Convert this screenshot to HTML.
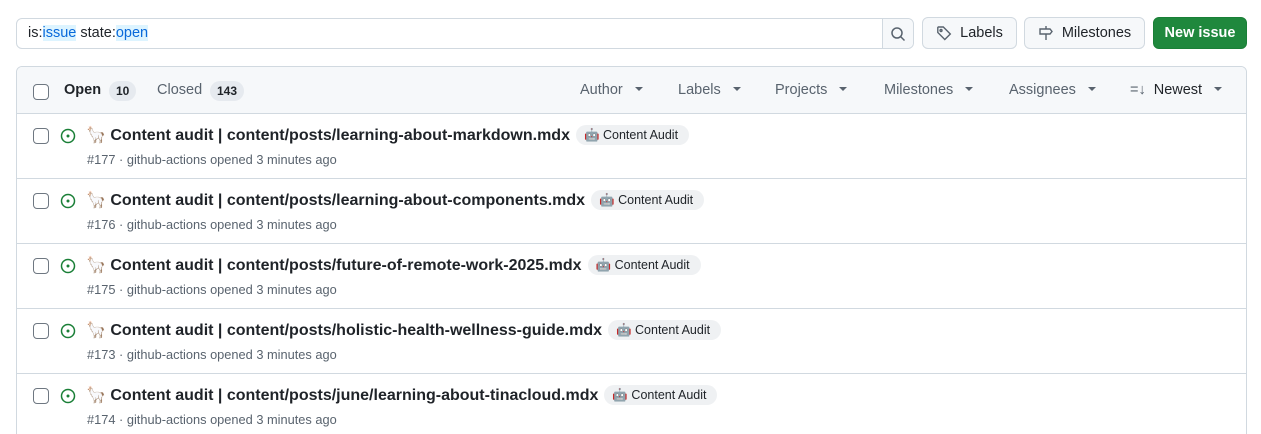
<!DOCTYPE html>
<html><head><style>
*{box-sizing:border-box;margin:0;padding:0}
html,body{width:1261px;height:434px;overflow:hidden}
body{background:#fff;font-family:"Liberation Sans",Arial,sans-serif;color:#1f2328;position:relative}
.abs{position:absolute}
.search{left:16px;top:18px;width:898px;height:31px;border:1px solid #d1d9e0;border-radius:6px;font-size:14.5px;line-height:29px;padding-left:11px}
.search .h{color:#0969da;background:#ddf4ff}
.sbtn{position:absolute;right:0;top:0;width:31px;height:29px;border-left:1px solid #d1d9e0;background:#f6f8fa;border-radius:0 6px 6px 0;display:flex;align-items:center;justify-content:center}
.btn{top:17px;height:32px;border:1px solid #d1d9e0;border-radius:6px;background:#f6f8fa;font-size:14.5px;font-weight:bold;display:flex;align-items:center;justify-content:center;gap:8px}
.box{left:16px;top:66px;width:1231px;height:380px;border:1px solid #d1d9e0;border-radius:6px;overflow:hidden}
.hdr{height:47px;background:#f6f8fa;border-bottom:1px solid #d1d9e0;position:relative;font-size:14.5px}
.cb{position:absolute;width:16px;height:16px;border:1px solid #6e7781;border-radius:4px;background:#fff}
.cnt{display:inline-block;background:#e6eaef;border-radius:10px;padding:0 7px;font-size:12px;font-weight:bold;line-height:20px}
.f{position:absolute;top:15px;color:#59636e}
.f:after{content:"";display:inline-block;margin-left:12px;border:4px solid transparent;border-top-color:#59636e;border-bottom:0;vertical-align:3px}
.row{height:65px;border-bottom:1px solid #d1d9e0;position:relative}
.t{position:absolute;left:69px;top:11px;font-size:16px;font-weight:bold;white-space:nowrap;display:flex;align-items:center}
.lab{display:inline-block;margin-left:6px;background:#eff1f3;border-radius:12px;font-size:12.5px;padding:0 11px 0 8px;line-height:20px;font-weight:normal}
.m{position:absolute;left:70px;top:38px;font-size:12.8px;color:#59636e}
.oi{position:absolute;left:43px;top:14px}
</style></head><body>
<div class="abs search">is:<span class="h">issue</span> state:<span class="h">open</span>
<div class="sbtn"><svg width="16" height="16" viewBox="0 0 16 16" fill="none" stroke="#59636e" stroke-width="1.5"><circle cx="7" cy="7" r="5"/><path d="M10.5 10.5l4 4"/></svg></div></div>
<div class="abs btn" style="left:922px;width:95px"><svg width="16" height="16" viewBox="0 0 16 16" fill="none" stroke="#59636e" stroke-width="1.4"><path d="M1.8 2.5v5l7 7 5.5-5.5-7-7h-5z"/><circle cx="5" cy="5.5" r="1"/></svg><span style="font-weight:normal">Labels</span></div>
<div class="abs btn" style="left:1024px;width:121px"><svg width="16" height="16" viewBox="0 0 16 16" fill="none" stroke="#59636e" stroke-width="1.4"><path d="M8 1v3M8 9v6M2 4h10l2 2.5-2 2.5H2z"/></svg><span style="font-weight:normal">Milestones</span></div>
<div class="abs btn" style="left:1153px;width:94px;background:#1f883d;border-color:#1a7f37;color:#fff">New issue</div>
<div class="abs box">
<div class="hdr">
<div class="cb" style="left:16px;top:17px"></div>
<span class="abs" style="left:47px;top:15px;font-weight:bold">Open</span><span class="abs cnt" style="left:92px;top:14px">10</span>
<span class="abs" style="left:140px;top:15px;color:#59636e">Closed</span><span class="abs cnt" style="left:193px;top:14px">143</span>
<span class="f" style="left:563px">Author</span>
<span class="f" style="left:661px">Labels</span>
<span class="f" style="left:758px">Projects</span>
<span class="f" style="left:867px">Milestones</span>
<span class="f" style="left:992px">Assignees</span>
<span class="f" style="left:1113px;color:#1f2328;font-weight:bold"><span style="font-weight:normal;color:#59636e;margin-right:8px">=↓</span><span style="font-weight:normal">Newest</span></span>
</div>
<div class="row"><div class="cb" style="left:16px;top:14px"></div><svg class="oi" width="16" height="16" viewBox="0 0 16 16"><circle cx="8" cy="8" r="6.5" fill="none" stroke="#1a7f37" stroke-width="1.5"/><circle cx="8" cy="8" r="1.5" fill="#1a7f37"/></svg><div class="t">🦙 Content audit | content/posts/learning-about-markdown.mdx<span class="lab">🤖 Content Audit</span></div><div class="m">#177 · github-actions opened 3 minutes ago</div></div>
<div class="row"><div class="cb" style="left:16px;top:14px"></div><svg class="oi" width="16" height="16" viewBox="0 0 16 16"><circle cx="8" cy="8" r="6.5" fill="none" stroke="#1a7f37" stroke-width="1.5"/><circle cx="8" cy="8" r="1.5" fill="#1a7f37"/></svg><div class="t">🦙 Content audit | content/posts/learning-about-components.mdx<span class="lab">🤖 Content Audit</span></div><div class="m">#176 · github-actions opened 3 minutes ago</div></div>
<div class="row"><div class="cb" style="left:16px;top:14px"></div><svg class="oi" width="16" height="16" viewBox="0 0 16 16"><circle cx="8" cy="8" r="6.5" fill="none" stroke="#1a7f37" stroke-width="1.5"/><circle cx="8" cy="8" r="1.5" fill="#1a7f37"/></svg><div class="t">🦙 Content audit | content/posts/future-of-remote-work-2025.mdx<span class="lab">🤖 Content Audit</span></div><div class="m">#175 · github-actions opened 3 minutes ago</div></div>
<div class="row"><div class="cb" style="left:16px;top:14px"></div><svg class="oi" width="16" height="16" viewBox="0 0 16 16"><circle cx="8" cy="8" r="6.5" fill="none" stroke="#1a7f37" stroke-width="1.5"/><circle cx="8" cy="8" r="1.5" fill="#1a7f37"/></svg><div class="t">🦙 Content audit | content/posts/holistic-health-wellness-guide.mdx<span class="lab">🤖 Content Audit</span></div><div class="m">#173 · github-actions opened 3 minutes ago</div></div>
<div class="row"><div class="cb" style="left:16px;top:14px"></div><svg class="oi" width="16" height="16" viewBox="0 0 16 16"><circle cx="8" cy="8" r="6.5" fill="none" stroke="#1a7f37" stroke-width="1.5"/><circle cx="8" cy="8" r="1.5" fill="#1a7f37"/></svg><div class="t">🦙 Content audit | content/posts/june/learning-about-tinacloud.mdx<span class="lab">🤖 Content Audit</span></div><div class="m">#174 · github-actions opened 3 minutes ago</div></div>
</div>
</body></html>
